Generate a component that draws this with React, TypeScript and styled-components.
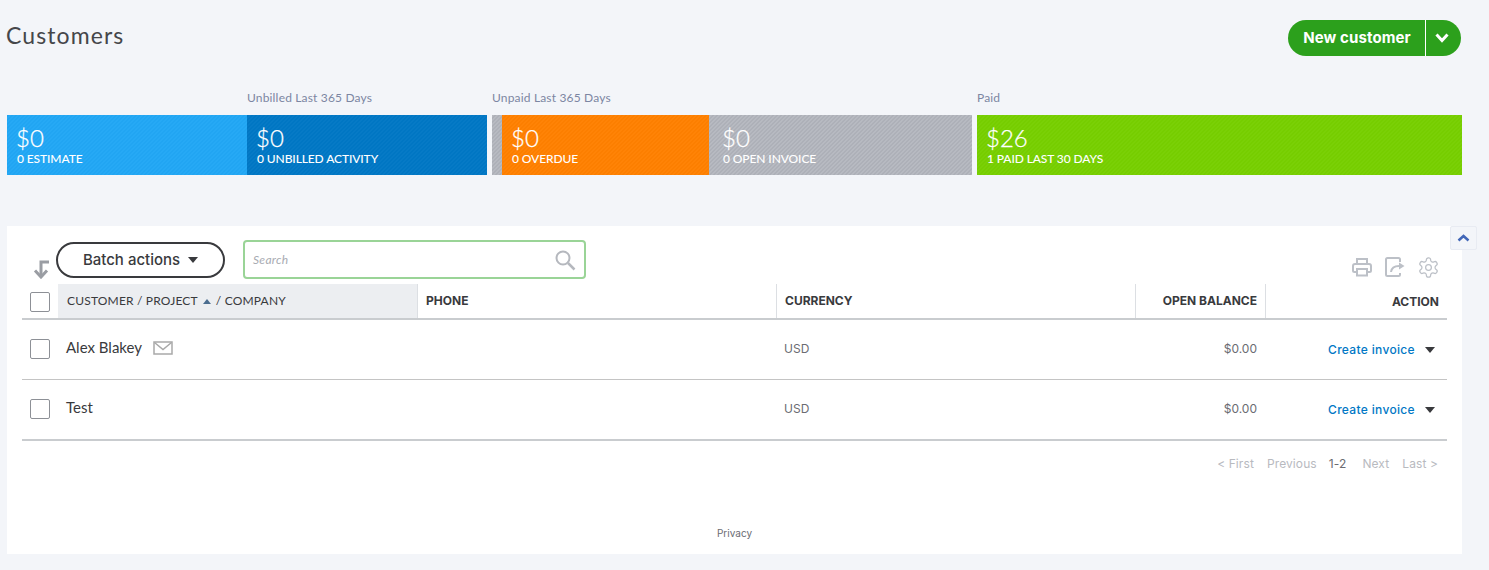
import React from "react";
import styled, { createGlobalStyle } from "styled-components";

const Global = createGlobalStyle`
  html, body { margin: 0; padding: 0; background: #f3f5f9; }
  body { font-family: "Lato", "Liberation Sans", sans-serif; color: #393a3d; }
  * { box-sizing: border-box; }
`;

const Page = styled.div`
  width: 1489px;
  height: 570px;
  padding: 20px 27px 0 7px;
  overflow: hidden;
`;

const Header = styled.header`
  display: flex;
  justify-content: space-between;
  align-items: flex-start;
  height: 36px;
  padding-right: 1px;
`;

const Title = styled.h1`
  margin: 0 0 0 -1px;
  font: 400 23px/30px "Lato", sans-serif;
  letter-spacing: 1.1px;
  color: #45464a;
`;

const SplitButton = styled.div`
  display: flex;
  width: 173px;
  height: 36px;
  border-radius: 18px;
  overflow: hidden;
  background: #2ca01c;
  color: #fff;
`;

const ButtonLabel = styled.span`
  flex: 1;
  display: flex;
  align-items: center;
  justify-content: center;
  padding: 0 0 1px 1px;
  font: 700 15px/1 "Inter", sans-serif;
  letter-spacing: 0.1px;
  border-right: 1px solid #fff;
`;

const ButtonCaret = styled.span`
  width: 35px;
  display: flex;
  align-items: center;
  justify-content: center;
  padding-right: 3px;
`;

const Stats = styled.section`
  display: flex;
  gap: 5px;
  margin-top: 34px;
`;

const Cluster = styled.div`
  display: flex;
`;

const StatGroup = styled.div<{ $w: number }>`
  width: ${(p) => p.$w}px;
`;

const StatLabel = styled.div`
  height: 25px;
  padding-top: 0;
  font: 400 12px/16px "Lato", sans-serif;
  letter-spacing: 0.17px;
  color: #7c86a2;
`;

const Bar = styled.div`
  display: flex;
  height: 60px;
`;

const Segment = styled.div<{ $bg: string; $w?: number; $pad?: boolean; $muted?: boolean }>`
  ${(p) => (p.$w ? `width: ${p.$w}px;` : "flex: 1;")}
  padding: 10px 0 0 ${(p) => (p.$pad ? 14 : 10)}px;
  color: #fff;
  background-color: ${(p) => p.$bg};
  background-image: repeating-linear-gradient(
    -45deg,
    rgba(255, 255, 255, ${(p) => (p.$muted ? 0.05 : 0.025)}) 0 1.414px,
    rgba(0, 0, 0, ${(p) => (p.$muted ? 0.03 : 0.012)}) 1.414px 2.828px
  );
`;

const Amount = styled.div`
  margin-left: -1px;
  font: 300 24px/26px "Lato", sans-serif;
  -webkit-text-stroke: 0.25px #fff;
`;

const Caption = styled.div`
  font: 500 12px/16px "Lato", sans-serif;
  letter-spacing: -0.1px;
`;

const Panel = styled.section`
  position: relative;
  width: 1455px;
  height: 328px;
  margin-top: 51px;
  padding: 14px 15px 0;
  background: #fff;
`;

const Collapse = styled.button`
  position: absolute;
  top: 0;
  right: -15px;
  width: 27px;
  height: 24px;
  padding: 0;
  border: 1px solid #e8ebf2;
  border-radius: 2px;
  background: #f3f5f9;
  display: flex;
  align-items: center;
  justify-content: center;
`;

const Toolbar = styled.div`
  display: flex;
  align-items: flex-start;
  height: 44px;
`;

const SortArrow = styled.svg`
  margin: 20px 6px 0 11px;
`;

const BatchButton = styled.button`
  width: 169px;
  height: 36px;
  margin-top: 2px;
  display: flex;
  align-items: center;
  justify-content: center;
  gap: 8px;
  background: #fff;
  border: 2px solid #393a3d;
  border-radius: 18px;
  color: #393a3d;
  font: 500 15px/1 "Inter", sans-serif;
  padding: 0 0 1px;
`;

const Triangle = styled.span<{ $c?: string }>`
  display: inline-block;
  width: 0;
  height: 0;
  border-left: 5.5px solid transparent;
  border-right: 5.5px solid transparent;
  border-top: 6px solid ${(p) => p.$c ?? "#393a3d"};
`;

const SearchBox = styled.div`
  width: 343px;
  height: 39px;
  margin-left: 18px;
  padding: 0 8px 0 8px;
  display: flex;
  align-items: center;
  justify-content: space-between;
  border: 2px solid #9ad497;
  border-radius: 4px;
`;

const SearchInput = styled.span`
  font: italic 400 12px/1 "Lato", sans-serif;
  color: #a8abb2;
  letter-spacing: 0.3px;
`;

const ToolIcons = styled.div`
  margin: 17px 9px 0 auto;
  display: flex;
  gap: 13px;
`;

const Row = styled.div<{ $strong?: boolean; $h: number }>`
  display: grid;
  grid-template-columns: 36px 359px 359px 359px 130px 182px;
  height: ${(p) => p.$h}px;
  border-bottom: ${(p) => (p.$strong ? 2 : 1)}px solid ${(p) => (p.$strong ? "#c9cccf" : "#c4c4c4")};
`;

const HeadCell = styled.div<{ $active?: boolean; $right?: boolean; $line?: boolean; $drop?: boolean }>`
  display: flex;
  align-items: center;
  padding: ${(p) => (p.$drop ? 2 : 0)}px 8px 0 ${(p) => (p.$line ? 8 : 9)}px;
  ${(p) => p.$right && "justify-content: flex-end;"}
  background: ${(p) => (p.$active ? "#eceef1" : "transparent")};
  ${(p) => p.$line && "border-left: 1px solid #dcdfe3;"}
  font: ${(p) => (p.$active ? 400 : 700)} 12px/1 ${(p) => (p.$active ? '"Lato"' : '"Inter"')}, sans-serif;
  letter-spacing: ${(p) => (p.$active ? 0.18 : 0)}px;
  color: #393a3d;
`;

const Check = styled.span<{ $top: number }>`
  display: block;
  width: 20px;
  height: 20px;
  margin: ${(p) => p.$top}px 0 0 8px;
  border: 1px solid #8d9096;
  border-radius: 2px;
  background: #fff;
`;

const CheckCell = styled.div``;

const SortUp = styled.span`
  width: 0;
  height: 0;
  margin: 0 5px 0 5px;
  border-left: 4px solid transparent;
  border-right: 4px solid transparent;
  border-bottom: 5px solid #4b6d8f;
`;

const NameCell = styled.div`
  display: flex;
  align-items: center;
  gap: 11px;
  padding: 0 0 4px 8px;
  font: 400 15px/1 "Lato", sans-serif;
  color: #393a3d;
`;

const Plain = styled.div<{ $right?: boolean }>`
  display: flex;
  align-items: center;
  ${(p) => p.$right && "justify-content: flex-end;"}
  padding: 0 8px 2px 8px;
  font: 400 12px/1 "Inter", sans-serif;
  color: #6b6c72;
`;

const ActionCell = styled.div`
  display: flex;
  align-items: center;
  justify-content: flex-end;
  gap: 10px;
  padding: 1px 12px 0 0;
`;

const ActionLink = styled.a`
  font: 500 12px/1 "Inter", sans-serif;
  letter-spacing: 0.33px;
  color: #0077c5;
`;

const Pager = styled.div`
  display: flex;
  justify-content: flex-end;
  height: 16px;
  margin-top: 15px;
  padding-right: 9px;
  font: 400 12px/16px "Inter", sans-serif;
  letter-spacing: 0.1px;
  color: #b8babf;
`;

const PageLink = styled.span<{ $gap: number }>`
  margin-left: ${(p) => p.$gap}px;
`;

const Current = styled(PageLink)`
  color: #6b6c72;
`;

const Privacy = styled.footer`
  margin-top: 54px;
  margin-left: -15px;
  width: 1455px;
  text-align: center;
  font: 400 10px/14px "Inter", sans-serif;
  color: #6b6c72;
`;

const GearIcon = styled.svg`
  margin: -1.5px -1.5px 0;
`;

const Print = () => (
  <svg width="20" height="20" viewBox="0 0 20 20" fill="none" stroke="#bcc0c7" strokeWidth="2">
    <path d="M5 7V2h10v5" />
    <path d="M5 15H2.500A1.500 1.500 0 0 1 1 13.500V9a2 2 0 0 1 2-2h14a2 2 0 0 1 2 2v4.500a1.500 1.500 0 0 1-1.500 1.500H15" />
    <path d="M5 12h10v6.500H5z" />
  </svg>
);
const Export = () => (
  <svg width="20" height="20" viewBox="0 0 20 20" fill="none" stroke="#bcc0c7" strokeWidth="2">
    <path d="M15 5V2.500A1.500 1.500 0 0 0 13.500 1H2.500A1.500 1.500 0 0 0 1 2.500v15A1.500 1.500 0 0 0 2.500 19h11a1.500 1.500 0 0 0 1.500-1.500V16" />
    <path d="M6 15c.5-4 3-6 8-6" />
    <path d="M14 5.500v7l5.500-3.500z" fill="#bcc0c7" stroke="none" />
  </svg>
);
const Gear = () => (
  <GearIcon width="23" height="23" viewBox="0 0 24 24" fill="none" stroke="#bcc0c7" strokeWidth="1.300" strokeLinecap="round" strokeLinejoin="round">
    <path d="M12.220 2h-.44a2 2 0 0 0-2 2v.18a2 2 0 0 1-1 1.730l-.43.250a2 2 0 0 1-2 0l-.150-.080a2 2 0 0 0-2.730.730l-.220.380a2 2 0 0 0 .730 2.730l.150.100a2 2 0 0 1 1 1.720v.510a2 2 0 0 1-1 1.740l-.150.090a2 2 0 0 0-.730 2.730l.220.380a2 2 0 0 0 2.730.730l.150-.080a2 2 0 0 1 2 0l.430.250a2 2 0 0 1 1 1.730V20a2 2 0 0 0 2 2h.440a2 2 0 0 0 2-2v-.180a2 2 0 0 1 1-1.730l.430-.250a2 2 0 0 1 2 0l.150.080a2 2 0 0 0 2.730-.730l.220-.390a2 2 0 0 0-.730-2.730l-.150-.080a2 2 0 0 1-1-1.740v-.500a2 2 0 0 1 1-1.740l.150-.090a2 2 0 0 0 .730-2.730l-.220-.380a2 2 0 0 0-2.730-.730l-.150.080a2 2 0 0 1-2 0l-.430-.250a2 2 0 0 1-1-1.730V4a2 2 0 0 0-2-2z" />
    <circle cx="12" cy="12" r="3" />
  </GearIcon>
);

const rows = [
  { name: "Alex Blakey", mail: true },
  { name: "Test", mail: false },
];

export default function App() {
  return (
    <Page>
      <Global />
      <Header>
        <Title>Customers</Title>
        <SplitButton>
          <ButtonLabel>New customer</ButtonLabel>
          <ButtonCaret>
            <svg width="14" height="10" viewBox="0 0 14 10" fill="none" stroke="#fff" strokeWidth="3">
              <path d="M1.500 1.500 7 7.500l5.500-6" />
            </svg>
          </ButtonCaret>
        </SplitButton>
      </Header>

      <Stats>
        <Cluster>
          <StatGroup $w={240}>
            <StatLabel>&nbsp;</StatLabel>
            <Bar>
              <Segment $bg="#21a7f5">
                <Amount>$0</Amount>
                <Caption>0 ESTIMATE</Caption>
              </Segment>
            </Bar>
          </StatGroup>
          <StatGroup $w={240}>
            <StatLabel>Unbilled Last 365 Days</StatLabel>
            <Bar>
              <Segment $bg="#0077c5">
                <Amount>$0</Amount>
                <Caption>0 UNBILLED ACTIVITY</Caption>
              </Segment>
            </Bar>
          </StatGroup>
        </Cluster>
        <StatGroup $w={480}>
          <StatLabel>Unpaid Last 365 Days</StatLabel>
          <Bar>
            <Segment $bg="#b3b6be" $w={10} $muted />
            <Segment $bg="#ff8000" $w={207}>
              <Amount>$0</Amount>
              <Caption>0 OVERDUE</Caption>
            </Segment>
            <Segment $bg="#b3b6be" $pad $muted>
              <Amount>$0</Amount>
              <Caption>0 OPEN INVOICE</Caption>
            </Segment>
          </Bar>
        </StatGroup>
        <StatGroup $w={485}>
          <StatLabel>Paid</StatLabel>
          <Bar>
            <Segment $bg="#77cf00">
              <Amount>$26</Amount>
              <Caption>1 PAID LAST 30 DAYS</Caption>
            </Segment>
          </Bar>
        </StatGroup>
      </Stats>

      <Panel>
        <Collapse aria-label="Collapse">
          <svg width="13" height="8" viewBox="0 0 13 8" fill="none" stroke="#4267b8" strokeWidth="2.500">
            <path d="M1.500 6.500 6.500 2l5 4.500" />
          </svg>
        </Collapse>

        <Toolbar>
          <SortArrow width="17" height="19" viewBox="0 0 17 19" fill="none" stroke="#9a9da3" strokeWidth="3">
            <path d="M16 2H8v14" />
            <path d="M2 10.500l6 6.500 6-6.500" />
          </SortArrow>
          <BatchButton>
            Batch actions <Triangle />
          </BatchButton>
          <SearchBox>
            <SearchInput>Search</SearchInput>
            <svg width="22" height="22" viewBox="0 0 22 22" fill="none" stroke="#b5b8be" strokeWidth="2">
              <circle cx="9" cy="9" r="6.500" />
              <path d="m14 14 6.500 6.500" strokeWidth="2.500" />
            </svg>
          </SearchBox>
          <ToolIcons>
            <Print />
            <Export />
            <Gear />
          </ToolIcons>
        </Toolbar>

        <Row $h={36} $strong>
          <CheckCell>
            <Check $top={8} />
          </CheckCell>
          <HeadCell $active>
            CUSTOMER / PROJECT <SortUp /> / COMPANY
          </HeadCell>
          <HeadCell $line>PHONE</HeadCell>
          <HeadCell $line>CURRENCY</HeadCell>
          <HeadCell $line $right>
            OPEN BALANCE
          </HeadCell>
          <HeadCell $line $right $drop>
            ACTION
          </HeadCell>
        </Row>

        {rows.map((r, i) => {
          const last = i === rows.length - 1;
          return (
            <Row key={r.name} $h={last ? 61 : 60} $strong={last}>
              <CheckCell>
                <Check $top={19} />
              </CheckCell>
              <NameCell>
                {r.name}
                {r.mail && (
                  <svg width="20" height="14" viewBox="0 0 20 14" fill="none" stroke="#a9a9a9" strokeWidth="1.500">
                    <path d="M1 1h18v12H1z" />
                    <path d="m1.500 1.500 8.500 7 8.500-7" />
                  </svg>
                )}
              </NameCell>
              <Plain />
              <Plain>USD</Plain>
              <Plain $right>$0.00</Plain>
              <ActionCell>
                <ActionLink>Create invoice</ActionLink>
                <Triangle />
              </ActionCell>
            </Row>
          );
        })}

        <Pager>
          <PageLink $gap={0}>&lt; First</PageLink>
          <PageLink $gap={13}>Previous</PageLink>
          <Current $gap={12}>1-2</Current>
          <PageLink $gap={16}>Next</PageLink>
          <PageLink $gap={13}>Last &gt;</PageLink>
        </Pager>
        <Privacy>Privacy</Privacy>
      </Panel>
    </Page>
  );
}
